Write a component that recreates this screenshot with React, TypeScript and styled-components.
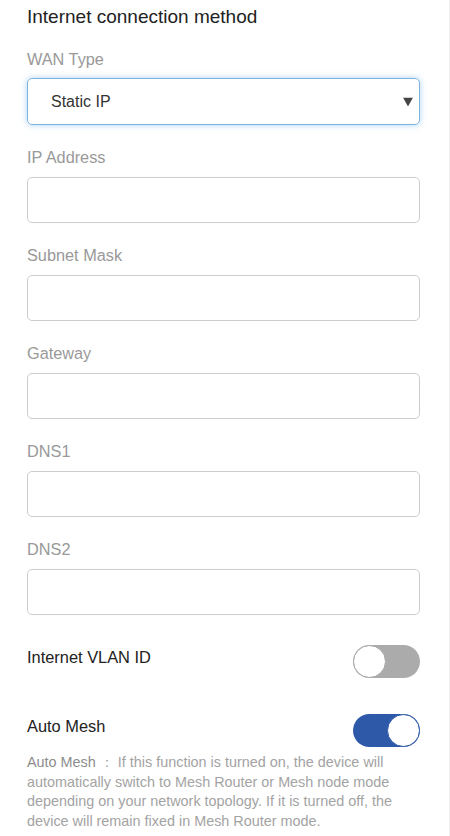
import React from "react";
import styled, { createGlobalStyle } from "styled-components";

const Global = createGlobalStyle`
  html, body { margin: 0; padding: 0; background: #fff; }
  body { font-family: "Liberation Sans", Arial, Helvetica, sans-serif; -webkit-font-smoothing: antialiased; }
  * { box-sizing: border-box; }
`;

const Page = styled.div`
  width: 450px;
  min-height: 836px;
  border-right: 1px solid #eeeeee;
  padding: 5px 29px 0 27px;
`;

const Title = styled.h2`
  margin: 0 0 20px;
  font-size: 19px;
  line-height: 24px;
  font-weight: 500;
  color: #222;
`;

const Field = styled.div`
  display: flex;
  flex-direction: column;
  margin-bottom: 22px;
`;

const Label = styled.label<{ $gap?: number }>`
  font-size: 16.3px;
  line-height: 20px;
  color: #999;
  margin-bottom: ${(p) => p.$gap ?? 10}px;
`;

const SelectBox = styled.div`
  position: relative;
  height: 47px;
  border: 1px solid #7fb3de;
  border-radius: 5px;
  box-shadow: 0 0 6px rgba(102, 175, 233, 0.55);
  display: flex;
  align-items: center;
  padding-left: 23px;
  font-size: 16px;
  color: #333;
`;

const Arrow = styled.svg`
  position: absolute;
  right: 6px;
  top: 50%;
  transform: translateY(-50%);
`;

const Input = styled.input`
  height: 46px;
  border: 1px solid #cccccc;
  border-radius: 5px;
  background: #fff;
  padding: 0 16px;
  font-size: 15px;
  outline: none;
`;

const Row = styled.div<{ $mt: number }>`
  display: flex;
  justify-content: space-between;
  align-items: center;
  margin-top: ${(p) => p.$mt}px;
`;

const RowLabel = styled.span`
  font-size: 16.4px;
  color: #222;
  margin-top: -9px;
`;

const Toggle = styled.div<{ $on: boolean }>`
  position: relative;
  width: 67px;
  height: 33px;
  border-radius: 17px;
  background: ${(p) => (p.$on ? "#2e58a8" : "#ababab")};
`;

const Knob = styled.div<{ $on: boolean }>`
  position: absolute;
  top: 0;
  ${(p) => (p.$on ? "right: 0;" : "left: 0;")}
  width: 33px;
  height: 33px;
  border-radius: 50%;
  background: #fff;
  border: 1px solid ${(p) => (p.$on ? "#2e58a8" : "#a5a5a5")};
`;

const Desc = styled.p`
  margin: 6px 0 0;
  font-size: 14.4px;
  line-height: 19.7px;
  color: #a3a3a3;
`;

const DescKey = styled.span`
  color: #8d8d8d;
`;

const fields = ["IP Address", "Subnet Mask", "Gateway", "DNS1", "DNS2"];

export default function App() {
  return (
    <>
      <Global />
      <Page>
        <Title>Internet connection method</Title>
        <Field>
          <Label $gap={9}>WAN Type</Label>
          <SelectBox>
            Static IP
            <Arrow width="10" height="9" viewBox="0 0 10 9">
              <path d="M0 0 L10 0 L5 9 Z" fill="#444" />
            </Arrow>
          </SelectBox>
        </Field>
        {fields.map((f) => (
          <Field key={f}>
            <Label>{f}</Label>
            <Input />
          </Field>
        ))}
        <Row $mt={30}>
          <RowLabel>Internet VLAN ID</RowLabel>
          <Toggle $on={false}>
            <Knob $on={false} />
          </Toggle>
        </Row>
        <Row $mt={36}>
          <RowLabel>Auto Mesh</RowLabel>
          <Toggle $on>
            <Knob $on />
          </Toggle>
        </Row>
        <Desc>
          <DescKey>Auto Mesh</DescKey> ： If this function is turned on, the device will
          automatically switch to Mesh Router or Mesh node mode depending on your network
          topology. If it is turned off, the device will remain fixed in Mesh Router mode.
        </Desc>
      </Page>
    </>
  );
}
